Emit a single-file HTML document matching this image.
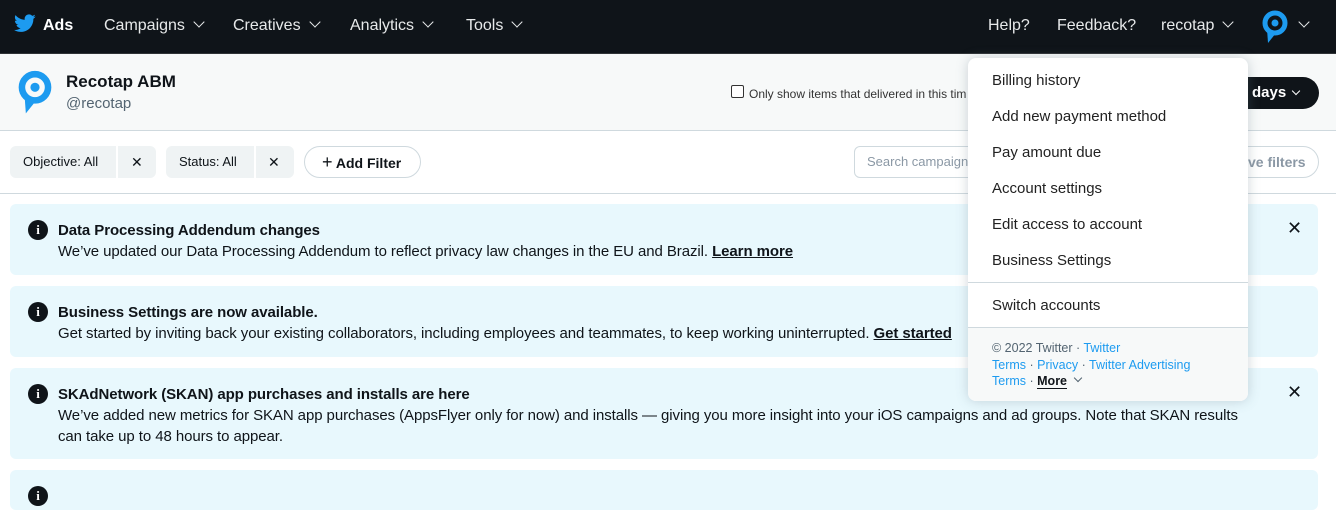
<!DOCTYPE html>
<html><head><meta charset="utf-8"><style>
*{box-sizing:border-box;margin:0;padding:0}
body{width:1336px;height:489px;overflow:hidden;font-family:"Liberation Sans",sans-serif;background:#fff;color:#0f1419;position:relative}
.nav{position:absolute;left:0;top:0;width:1336px;height:53px;background:#0f1419;color:#e7e9ea;font-size:16px}
.nav span{position:absolute;top:17px}
.chev{display:inline-block;width:8px;height:8px;border-right:1.6px solid currentColor;border-bottom:1.6px solid currentColor;transform:rotate(45deg);margin-left:10px;position:relative;top:-4px}
.hdr{position:absolute;top:53px;left:0;width:1336px;height:78px;background:#f7f9f9;border-top:1px solid #2f3336;border-bottom:1px solid #cfd9de}
.frow{position:absolute;top:131px;left:0;width:1336px;height:63px;border-bottom:1px solid #cfd9de}
.pill{position:absolute;top:146px;height:32px;background:#eff3f4;border-radius:6px;font-size:13px;line-height:32px}
.ban{position:absolute;left:10px;width:1308px;background:#e8f8fd;border-radius:6px;font-size:15px;line-height:21px;padding:16px 0 0 48px;letter-spacing:-0.08px}
.ban b{font-weight:bold;display:block}
.ic{position:absolute;left:18px;top:16px;width:20px;height:20px;border-radius:50%;background:#0f1419;color:#fff;font:bold 13px/20px "Liberation Serif",serif;text-align:center}
.x{position:absolute;right:16px;top:14px;font-size:18px;color:#0f1419}
.dd{position:absolute;left:968px;top:58px;width:280px;height:343px;background:#fff;border-radius:8px;box-shadow:0 0 12px rgba(101,119,134,.3);overflow:hidden;font-size:15px;color:#222}
.dd .it{position:absolute;left:24px}
.ft{position:absolute;left:0;top:269px;width:280px;height:74px;background:#f7f9f9;border-top:1px solid #cfd9de;font-size:12.5px;line-height:16.5px;padding:12px 24px;color:#536471}
.ft a{color:#1d9bf0;text-decoration:none}
</style></head><body>
<div class="nav">
<svg style="position:absolute;left:14px;top:14px" width="22" height="19" viewBox="0 0 24 20"><path fill="#1d9bf0" d="M23.6 2.4c-.9.4-1.8.6-2.8.8 1-.6 1.8-1.5 2.1-2.7-.9.6-2 1-3.1 1.2C19 .7 17.8.1 16.4.1c-2.7 0-4.8 2.2-4.8 4.8 0 .4 0 .8.1 1.1C7.7 5.8 4.1 3.9 1.7.9c-.4.7-.7 1.6-.7 2.4 0 1.7.9 3.2 2.2 4-.8 0-1.5-.2-2.2-.6v.1c0 2.3 1.7 4.3 3.9 4.7-.4.1-.8.2-1.3.2-.3 0-.6 0-.9-.1.6 1.9 2.4 3.3 4.5 3.4-1.7 1.3-3.7 2.1-6 2.1-.4 0-.8 0-1.2-.1 2.1 1.4 4.7 2.2 7.4 2.2 8.9 0 13.7-7.4 13.7-13.7v-.6c1-.7 1.8-1.6 2.5-2.5z"/></svg>
<span style="left:43px;font-weight:bold;color:#fff">Ads</span>
<span style="left:104px">Campaigns<i class="chev"></i></span>
<span style="left:233px">Creatives<i class="chev"></i></span>
<span style="left:350px">Analytics<i class="chev"></i></span>
<span style="left:466px">Tools<i class="chev"></i></span>
<span style="left:988px">Help?</span>
<span style="left:1057px">Feedback?</span>
<span style="left:1161px">recotap<i class="chev"></i></span>
<svg style="position:absolute;left:1262px;top:10px" width="26" height="34" viewBox="0 0 26 34"><circle cx="13" cy="13" r="10" fill="none" stroke="#1d9bf0" stroke-width="5"/><circle cx="13" cy="13" r="3.5" fill="#1d9bf0"/><path d="M5 19 L6 33 L14 23Z" fill="#1d9bf0"/></svg>
<span style="left:1300px"><i class="chev" style="margin:0"></i></span>
</div>
<div class="hdr">
<svg style="position:absolute;left:18px;top:16px" width="34" height="45" viewBox="0 0 26 34"><circle cx="13" cy="13" r="10" fill="none" stroke="#1d9bf0" stroke-width="5"/><circle cx="13" cy="13" r="3.5" fill="#1d9bf0"/><path d="M5 19 L6 33 L14 23Z" fill="#1d9bf0"/></svg>
<div style="position:absolute;left:66px;top:18px;font-size:17px;font-weight:bold">Recotap ABM</div>
<div style="position:absolute;left:66px;top:41px;font-size:15px;color:#536471">@recotap</div>
<div style="position:absolute;left:731px;top:31px;width:13px;height:13px;border:1px solid #333;border-radius:2px;background:#fff"></div>
<div style="position:absolute;left:749px;top:33px;font-size:12px;color:#333">Only show items that delivered in this tim</div>
<div style="position:absolute;left:1200px;top:23px;width:119px;height:32px;background:#0f1419;border-radius:16px;color:#fff;font-weight:bold;font-size:15px;line-height:32px;padding-left:52px">days<i class="chev" style="margin-left:7px;width:6px;height:6px;top:-3px"></i></div>
</div>
<div class="frow"></div>
<div class="pill" style="left:10px;width:146px"><span style="padding-left:13px">Objective: All</span><span style="position:absolute;left:106px;top:0;width:2px;height:32px;background:#fff"></span><span style="position:absolute;left:121px;font-size:14px">✕</span></div>
<div class="pill" style="left:166px;width:128px"><span style="padding-left:13px">Status: All</span><span style="position:absolute;left:88px;top:0;width:2px;height:32px;background:#fff"></span><span style="position:absolute;left:102px;font-size:14px">✕</span></div>
<div style="position:absolute;left:304px;top:146px;width:117px;height:32px;border:1px solid #cfd9de;border-radius:16px;font-size:14px;font-weight:bold;line-height:30px;padding-left:17px"><span style="font-weight:normal;font-size:18px">+</span> Add Filter</div>
<div style="position:absolute;left:854px;top:146px;width:130px;height:32px;border:1px solid #cfd9de;border-radius:6px;font-size:13px;color:#8b98a5;line-height:30px;padding-left:12px">Search campaign</div>
<div style="position:absolute;left:1210px;top:146px;width:109px;height:32px;border:1px solid #cfd9de;border-radius:16px;font-size:14px;color:#8b98a5;font-weight:bold;line-height:30px;padding-left:37px">ve filters</div>
<div class="ban" style="top:204px;height:71px"><div class="ic">i</div><b>Data Processing Addendum changes</b>We’ve updated our Data Processing Addendum to reflect privacy law changes in the EU and Brazil. <u style="font-weight:bold">Learn more</u><span class="x">✕</span></div>
<div class="ban" style="top:286px;height:71px"><div class="ic">i</div><b>Business Settings are now available.</b>Get started by inviting back your existing collaborators, including employees and teammates, to keep working uninterrupted. <u style="font-weight:bold">Get started</u></div>
<div class="ban" style="top:368px;height:91px"><div class="ic">i</div><b>SKAdNetwork (SKAN) app purchases and installs are here</b>We’ve added new metrics for SKAN app purchases (AppsFlyer only for now) and installs — giving you more insight into your iOS campaigns and ad groups. Note that SKAN results<br>can take up to 48 hours to appear.<span class="x">✕</span></div>
<div class="ban" style="top:470px;height:40px"><div class="ic">i</div></div>
<div class="dd">
<div class="it" style="top:14px">Billing history</div>
<div class="it" style="top:50px">Add new payment method</div>
<div class="it" style="top:86px">Pay amount due</div>
<div class="it" style="top:122px">Account settings</div>
<div class="it" style="top:158px">Edit access to account</div>
<div class="it" style="top:194px">Business Settings</div>
<div style="position:absolute;top:224px;left:0;width:280px;border-top:1px solid #cfd9de"></div>
<div class="it" style="top:239px">Switch accounts</div>
<div class="ft">© 2022 Twitter · <a>Twitter</a><br><a>Terms</a> · <a>Privacy</a> · <a>Twitter Advertising</a><br><a>Terms</a> · <b style="color:#0f1419;border-bottom:1px solid #0f1419">More</b> <i class="chev" style="margin-left:4px;width:6px;height:6px;color:#536471"></i></div>
</div>
</body></html>
